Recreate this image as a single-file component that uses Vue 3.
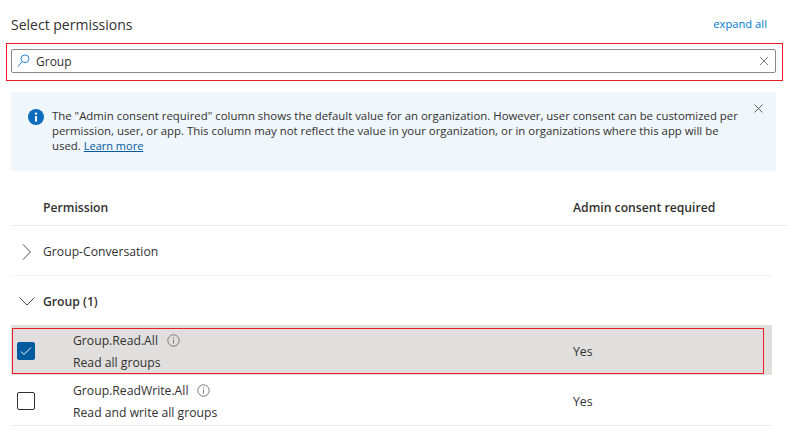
<script setup>
const groups = [
  { name: 'Group-Conversation', open: false },
  { name: 'Group (1)', open: true },
]
const rows = [
  { name: 'Group.Read.All', desc: 'Read all groups', consent: 'Yes', checked: true },
  { name: 'Group.ReadWrite.All', desc: 'Read and write all groups', consent: 'Yes', checked: false },
]
</script>

<template>
  <div class="page">
    <div class="title-row">
      <h2 class="title">Select permissions</h2>
      <a class="expand">expand all</a>
    </div>

    <div class="search-mark">
      <div class="search">
        <svg class="search-icon" width="14" height="14" viewBox="0 0 14 14" fill="none" stroke="#2b88d8" stroke-width="1">
          <circle cx="8" cy="4.8" r="3.9" />
          <path d="M5 7.8.8 12.6" />
        </svg>
        <span class="search-text">Group</span>
        <svg class="x" width="10" height="10" viewBox="0 0 10 10" fill="none" stroke="#7a7876" stroke-width="1">
          <path d="M1 1l8 8M9 1l-8 8" />
        </svg>
      </div>
    </div>

    <div class="banner">
      <svg class="info" width="16" height="16" viewBox="0 0 16 16">
        <circle cx="8" cy="8" r="8" fill="#0f6cbd" />
        <rect x="7" y="7" width="2" height="5.5" fill="#fff" />
        <circle cx="8" cy="4.6" r="1.2" fill="#fff" />
      </svg>
      <p class="banner-text">
        The "Admin consent required" column shows the default value for an organization. However, user consent can be customized per<br />
        permission, user, or app. This column may not reflect the value in your organization, or in organizations where this app will be<br />
        used. <a class="learn">Learn more</a>
      </p>
      <svg class="banner-x" width="9" height="9" viewBox="0 0 9 9" fill="none" stroke="#605e5c" stroke-width="1">
        <path d="M.5.5l8 8M8.5.5l-8 8" />
      </svg>
    </div>

    <div class="head">
      <span class="col-a">Permission</span>
      <span class="col-b">Admin consent required</span>
    </div>

    <div v-for="g in groups" :key="g.name" class="group" :class="{ open: g.open }">
      <svg v-if="g.open" class="chev" width="16" height="16" viewBox="0 0 16 16" fill="none" stroke="#484644" stroke-width="1">
        <path d="M.5 3.5 8 11l7.5-7.5" />
      </svg>
      <svg v-else class="chev" width="16" height="16" viewBox="0 0 16 16" fill="none" stroke="#484644" stroke-width="1">
        <path d="M4 .5 11.5 8 4 15.5" />
      </svg>
      <span class="group-name">{{ g.name }}</span>
    </div>

    <div v-for="r in rows" :key="r.name" class="row" :class="{ selected: r.checked }">
      <span class="check" :class="{ on: r.checked }">
        <svg v-if="r.checked" width="12" height="10" viewBox="0 0 12 10" fill="none" stroke="#fff" stroke-width="1">
          <path d="M1 5.5 4 8.5 11 1.5" />
        </svg>
      </span>
      <div class="perm">
        <div class="perm-name">
          {{ r.name }}
          <svg class="tip" width="13" height="13" viewBox="0 0 13 13" fill="none" stroke="#7a7876" stroke-width="1">
            <circle cx="6.5" cy="6.5" r="5.7" />
            <path d="M6.5 5.6v4M6.5 3.2v1.2" />
          </svg>
        </div>
        <div class="perm-desc">{{ r.desc }}</div>
      </div>
      <span class="consent">{{ r.consent }}</span>
      <span v-if="r.checked" class="row-mark"></span>
    </div>
  </div>
</template>

<style scoped>
.page {
  width: 800px;
  height: 444px;
  overflow: hidden;
  box-sizing: border-box;
  padding: 14px 0 0 11px;
  background: #fff;
  font-family: "Open Sans", "Noto Sans", sans-serif;
  font-size: 12.2px;
  color: #323130;
}

.title-row {
  display: flex;
  align-items: center;
  justify-content: space-between;
  width: 756px;
  height: 21px;
}

.title {
  margin: 0;
  font-size: 14px;
  font-weight: 400;
}

.expand {
  margin-bottom: 3px;
  color: #0078d4;
  font-size: 11.2px;
}

.search-mark {
  width: 777px;
  height: 38px;
  box-sizing: border-box;
  margin: 8px 0 0 -5px;
  padding: 5px 6px 0 4px;
  border: 1px solid #ed1c24;
}

.search {
  display: flex;
  align-items: center;
  height: 24px;
  box-sizing: border-box;
  padding: 0 6px 0 5px;
  border: 1px solid #8a8886;
  border-radius: 2px;
}

.search-text {
  flex: 1;
  margin-left: 5px;
  font-size: 12px;
}

.banner {
  display: flex;
  width: 765px;
  height: 79px;
  box-sizing: border-box;
  margin-top: 11px;
  padding: 16px 12px 0 17px;
  background: #eff6fc;
}

.info {
  flex: none;
  margin-top: 1px;
}

.banner-text {
  flex: 1;
  margin: 0 0 0 8px;
  font-size: 11.4px;
  line-height: 15px;
  white-space: nowrap;
}

.learn {
  color: #005a9e;
  font-size: 11px;
  text-decoration: underline;
}

.banner-x {
  flex: none;
  margin: -4px 1px 0 -1px;
}

.head {
  display: flex;
  align-items: flex-end;
  width: 777px;
  height: 45px;
  padding-bottom: 9px;
  border-bottom: 1px solid #edebe9;
  font-weight: 600;
}

.col-a {
  width: 562px;
  padding-left: 32px;
  box-sizing: border-box;
}

.group {
  display: flex;
  align-items: center;
  width: 761px;
  height: 50px;
  box-sizing: border-box;
  padding: 2px 0 0 8px;
  border-bottom: 1px solid #f3f2f1;
}

.group.open {
  height: 49px;
  border-bottom: 0;
  font-weight: 600;
}

.chev {
  flex: none;
  margin-right: 8px;
}

.row {
  position: relative;
  display: flex;
  align-items: center;
  width: 761px;
  height: 51px;
  box-sizing: border-box;
  padding-top: 2px;
  border-bottom: 1px solid #edebe9;
}

.row.selected {
  height: 50px;
  background: #e1dfdd;
  border-bottom: 0;
}

.check {
  flex: none;
  display: flex;
  align-items: center;
  justify-content: center;
  width: 18px;
  height: 18px;
  box-sizing: border-box;
  margin-left: 6px;
  border: 1px solid #323130;
  border-radius: 2px;
}

.check.on {
  background: #005a9e;
  border-color: #005a9e;
}

.perm {
  align-self: flex-start;
  width: 500px;
  margin-left: 38px;
  padding-top: 2px;
}

.perm-name {
  display: flex;
  align-items: center;
  gap: 9px;
  height: 22px;
}

.perm-desc {
  height: 22px;
  margin-top: 1px;
  line-height: 22px;
}

.row-mark {
  position: absolute;
  left: 1px;
  top: 3px;
  width: 752px;
  height: 46px;
  box-sizing: border-box;
  border: 1px solid #ed1c24;
}
</style>

<style>
html,
body {
  margin: 0;
  background: #fff;
}
</style>
